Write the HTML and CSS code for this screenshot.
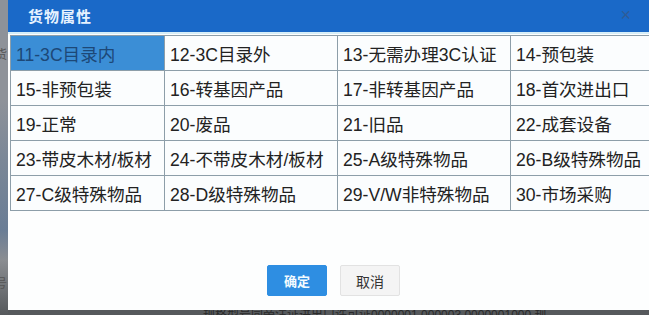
FILE: index.html
```html
<!DOCTYPE html>
<html lang="zh">
<head>
<meta charset="utf-8">
<link rel="stylesheet" href="styles.css">
</head>
<body>
<div class="page">
  <div class="side">
    <span>货</span><span>号</span>
  </div>
  <div class="main">
    <div class="dialog">
      <div class="titlebar">
        <span class="title">货物属性</span>
        <span class="close">×</span>
      </div>
      <div class="body">
        <table class="grid">
          <colgroup><col class="c1"><col class="c2"><col class="c2"><col class="c2"></colgroup>
          <tr><td class="sel">11-3C目录内</td><td>12-3C目录外</td><td>13-无需办理3C认证</td><td>14-预包装</td></tr>
          <tr><td>15-非预包装</td><td>16-转基因产品</td><td>17-非转基因产品</td><td>18-首次进出口</td></tr>
          <tr><td>19-正常</td><td>20-废品</td><td>21-旧品</td><td>22-成套设备</td></tr>
          <tr><td>23-带皮木材/板材</td><td>24-不带皮木材/板材</td><td>25-A级特殊物品</td><td>26-B级特殊物品</td></tr>
          <tr><td>27-C级特殊物品</td><td>28-D级特殊物品</td><td>29-V/W非特殊物品</td><td>30-市场采购</td></tr>
        </table>
      </div>
      <div class="actions">
        <button class="btn primary">确定</button>
        <button class="btn">取消</button>
      </div>
    </div>
    <div class="below">规格型号同旁注证进出口许可证0000001 000003 0000001000 规</div>
  </div>
</div>
</body>
</html>
```
FILE: styles.css
```css
html, body {
  margin: 0;
  padding: 0;
  overflow: hidden;
}
body {
  width: 649px;
  height: 315px;
  background: #6d7177;
  font-family: "Liberation Sans", "Noto Sans CJK SC", sans-serif;
}
.page {
  display: flex;
  height: 315px;
}
.side {
  width: 8px;
  flex: none;
  background: linear-gradient(#8e9299 0, #8e9299 100px, #7b8797 160px, #6a7d95 230px, #8a8d91 260px, #56595c 315px);
  display: flex;
  flex-direction: column;
  overflow: hidden;
  color: #555;
  font-size: 12px;
  line-height: 14px;
  padding-top: 48px;
  gap: 215px;
  box-sizing: border-box;
}
.side span {
  margin-left: -5px;
}
.main {
  flex: none;
  width: 651px;
  height: 315px;
  display: flex;
  flex-direction: column;
}
.dialog {
  height: 310px;
  flex: none;
  background: #fdfefe;
  display: flex;
  flex-direction: column;
  overflow: hidden;
}
.titlebar {
  height: 34px;
  flex: none;
  box-sizing: border-box;
  background: #1a69c8;
  border-bottom: 2px solid #d6eef8;
  display: flex;
  align-items: center;
  justify-content: space-between;
  padding: 0 0 2px 20px;
}
.title {
  color: #e6f2ff;
  font-family: "Noto Sans CJK SC", sans-serif;
  font-size: 15px;
  font-weight: bold;
  letter-spacing: 1px;
}
.close {
  color: #2f5c96;
  font-size: 18px;
  margin-right: 28px;
}
.body {
  padding: 1px 0 0 2px;
  flex: none;
}
.grid {
  border-collapse: collapse;
  table-layout: fixed;
  width: 674px;
}
.grid col.c1 { width: 154px; }
.grid col.c2 { width: 173px; }
.grid td {
  border: 1px solid #8d9ea9;
  height: 34px;
  padding: 0 0 0 5px;
  font-size: 17.6px;
  color: #222;
  white-space: nowrap;
  overflow: hidden;
  background: #fbfdfe;
}
.grid td.sel {
  background: #3b8ed6;
  color: #1d4877;
}
.actions {
  display: flex;
  justify-content: center;
  gap: 13px;
  margin-top: 54px;
}
.btn {
  width: 60px;
  height: 31px;
  border: 1px solid #e2e2e2;
  background: #f4f4f4;
  color: #333;
  font-family: "Noto Sans CJK SC", sans-serif;
  font-size: 14px;
  border-radius: 2px;
  padding: 0;
}
.btn.primary {
  background: #2e8ee2;
  border-color: #2e8ee2;
  color: #f2fbff;
  font-weight: bold;
  font-size: 13px;
}
.below {
  flex: 1;
  background: #56595c;
  color: #2a2a2a;
  font-size: 12px;
  line-height: 10px;
  padding-left: 195px;
  overflow: hidden;
  white-space: nowrap;
}
```
